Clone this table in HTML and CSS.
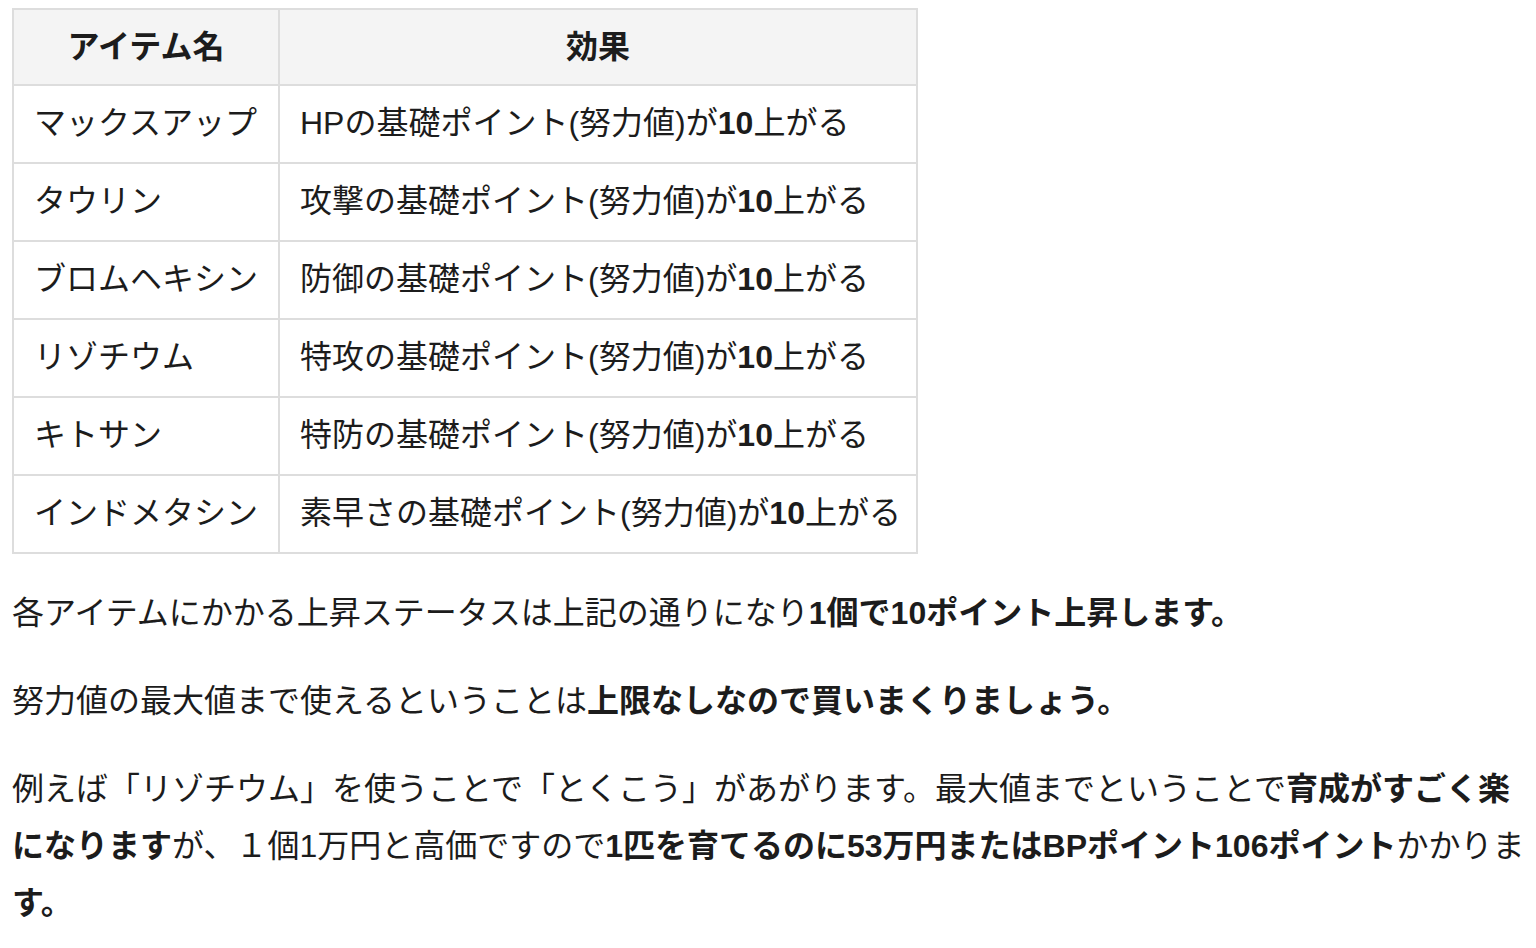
FILE: index.html
```html
<!DOCTYPE html>
<html lang="ja">
<head>
    <meta charset="UTF-8">
    <meta name="viewport" content="width=device-width, initial-scale=1.0">
    <title>努力値アイテム</title>
    <link rel="stylesheet" href="styles.css">
</head>
<body>
    <div class="entry">
        <!-- Item table -->
        <table class="item-table">
            <colgroup>
                <col class="col-name">
                <col class="col-effect">
            </colgroup>
            <thead>
                <tr>
                    <th>アイテム名</th>
                    <th>効果</th>
                </tr>
            </thead>
            <tbody>
                <tr>
                    <td>マックスアップ</td>
                    <td>HPの基礎ポイント(努力値)が<strong>10</strong>上がる</td>
                </tr>
                <tr>
                    <td>タウリン</td>
                    <td>攻撃の基礎ポイント(努力値)が<strong>10</strong>上がる</td>
                </tr>
                <tr>
                    <td>ブロムヘキシン</td>
                    <td>防御の基礎ポイント(努力値)が<strong>10</strong>上がる</td>
                </tr>
                <tr>
                    <td>リゾチウム</td>
                    <td>特攻の基礎ポイント(努力値)が<strong>10</strong>上がる</td>
                </tr>
                <tr>
                    <td>キトサン</td>
                    <td>特防の基礎ポイント(努力値)が<strong>10</strong>上がる</td>
                </tr>
                <tr>
                    <td>インドメタシン</td>
                    <td>素早さの基礎ポイント(努力値)が<strong>10</strong>上がる</td>
                </tr>
            </tbody>
        </table>

        <p>各アイテムにかかる上昇ステータスは上記の通りになり<strong>1個で10ポイント上昇します。</strong></p>
        <p>努力値の最大値まで使えるということは<strong>上限なしなので買いまくりましょう。</strong></p>
        <p>例えば「リゾチウム」を使うことで「とくこう」があがります。最大値までということで<strong>育成がすごく楽になります</strong>が、１個1万円と高価ですので<strong>1匹を育てるのに53万円またはBPポイント106ポイント</strong>かかりま<strong>す。</strong></p>
    </div>
</body>
</html>
```

FILE: styles.css
```css
body {
    margin: 0;
    padding: 8px 12px;
    background: #fff;
    color: #1c1c1c;
    font-family: "Liberation Sans", "Noto Sans CJK JP", sans-serif;
    font-size: 32px;
}
.entry {
    width: 1520px;
}
.item-table {
    border-collapse: collapse;
    table-layout: fixed;
    width: 906px;
    margin: 0;
}
.col-name {
    width: 266px;
}
.item-table th,
.item-table td {
    border: 2px solid #dddddd;
    line-height: 48px;
    text-align: left;
    white-space: nowrap;
}
.item-table th {
    background: #f4f4f4;
    font-weight: bold;
    text-align: center;
    padding: 13px 20px 13px;
}
.item-table td {
    padding: 13px 20px 15px;
}
.entry p {
    margin: 31px 0 0;
    line-height: 57px;
}
.entry strong {
    font-weight: bold;
}
```
